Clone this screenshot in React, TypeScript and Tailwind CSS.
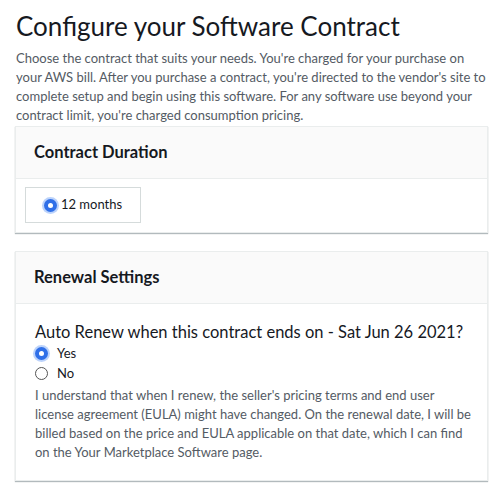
import React, { useState } from 'react';

const Radio: React.FC<{ checked: boolean }> = ({ checked }) => (
  <span
    className={`inline-flex w-[13px] h-[13px] rounded-full items-center justify-center shrink-0 ${
      checked ? 'bg-[#2f6fe8] ring-2 ring-[#bcd3fb]' : 'border border-[#555] bg-white'
    }`}
  >
    {checked && <span className="w-[5px] h-[5px] rounded-full bg-white" />}
  </span>
);

export default function App() {
  const [renew, setRenew] = useState('yes');

  return (
    <div className="w-[500px] h-[491px] bg-white px-[15px] pt-[8px] text-[#16191f] font-['Lato',sans-serif]">
      <h1 className="text-[26px] leading-[36px] pl-[1px]">Configure your Software Contract</h1>
      <p className="mt-[5px] w-[476px] text-[13px] leading-[19px] text-[#545b64] pl-[1px]">
        Choose the contract that suits your needs. You're charged for your purchase on your AWS bill. After you
        purchase a contract, you're directed to the vendor's site to complete setup and begin using this software.
        For any software use beyond your contract limit, you're charged consumption pricing.
      </p>

      <div className="mt-[1px] w-[473px] border border-[#eaeded] shadow-[0_1px_1px_rgba(0,28,36,0.3)]">
        <div className="h-[52px] bg-[#fafafa] border-b border-[#eaeded] flex items-center px-[18px]">
          <h2 className="text-[16.5px] font-bold">Contract Duration</h2>
        </div>
        <div className="px-[9px] pt-[8px] pb-[9px] bg-white">
          <div className="w-[116px] h-[36px] border border-[#d5dbdb] flex items-center justify-center gap-[4px] text-[13px] text-[#16191f]">
            <Radio checked />
            <span>12 months</span>
          </div>
        </div>
      </div>

      <div className="mt-[18px] w-[473px] border border-[#eaeded] shadow-[0_1px_1px_rgba(0,28,36,0.3)]">
        <div className="h-[52px] bg-[#fafafa] border-b border-[#eaeded] flex items-center px-[18px]">
          <h2 className="text-[16.5px] font-bold">Renewal Settings</h2>
        </div>
        <div className="pl-[19px] pr-[12px] pt-[16px] pb-[18px] bg-white">
          <div className="text-[16.5px] leading-[24px] whitespace-nowrap">
            Auto Renew when this contract ends on - Sat Jun 26 2021?
          </div>
          <label className="flex items-center gap-[9px] text-[13px] leading-[19px]" onClick={() => setRenew('yes')}>
            <Radio checked={renew === 'yes'} />
            <span>Yes</span>
          </label>
          <label className="flex items-center gap-[9px] text-[13px] leading-[19px] mt-[1px]" onClick={() => setRenew('no')}>
            <Radio checked={renew === 'no'} />
            <span>No</span>
          </label>
          <p className="mt-[3px] text-[13px] leading-[19px] text-[#545b64]">
            I understand that when I renew, the seller's pricing terms and end user license agreement (EULA) might
            have changed. On the renewal date, I will be billed based on the price and EULA applicable on that date,
            which I can find on the Your Marketplace Software page.
          </p>
        </div>
      </div>
    </div>
  );
}
